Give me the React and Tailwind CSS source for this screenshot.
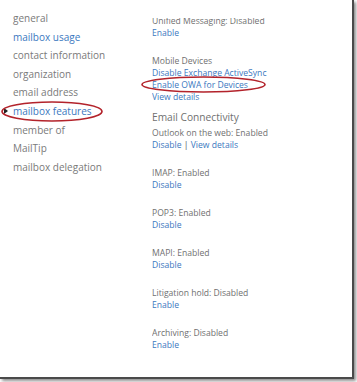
export default function App() {
  const nav = [
    { t: "general" },
    { t: "mailbox usage", blue: true },
    { t: "contact information" },
    { t: "organization" },
    { t: "email address" },
    { t: "mailbox features", blue: true, active: true },
    { t: "member of" },
    { t: "MailTip" },
    { t: "mailbox delegation" },
  ];
  const Label = ({ children }) => (
    <div className="text-[#707070] leading-[12px] h-[12px] whitespace-nowrap">{children}</div>
  );
  const Link = ({ children }) => (
    <div className="text-[#3b78c0] leading-[12px] h-[12px] whitespace-nowrap">{children}</div>
  );
  return (
    <div className="w-[357px] h-[382px] bg-white" style={{ fontFamily: '"Open Sans", "Noto Sans", sans-serif' }}>
      <div className="relative w-[354px] h-[379px] bg-white border-r-[2px] border-b-[2px] border-[#4a4a4a] shadow-[2px_2px_3px_rgba(0,0,0,0.45)] flex">
        <div className="w-[152px] shrink-0 pl-[13px] pt-[9px] text-[10px] leading-[18.6px]">
          {nav.map((n) => (
            <div key={n.t} className={`relative h-[18.6px] whitespace-nowrap ${n.blue ? "text-[#3b78c0]" : "text-[#7a7a7a]"}`}>
              {n.active && (
                <span className="absolute left-[-9px] top-[6px] w-0 h-0 border-y-[3.5px] border-y-transparent border-l-[4px] border-l-[#222]" />
              )}
              {n.t}
            </div>
          ))}
        </div>
        <div className="flex-1 mt-[18px] overflow-hidden text-[8.6px]">
          <div className="-mt-[3px]">
            <Label>Unified Messaging: Disabled</Label>
            <Link>Enable</Link>
            <div className="mt-[16px]">
              <Label>Mobile Devices</Label>
              <Link>Disable Exchange ActiveSync</Link>
              <Link>Enable OWA for Devices</Link>
              <Link>View details</Link>
            </div>
            <div className="mt-[4px] text-[10.2px] leading-[20px] h-[20px] text-[#707070] whitespace-nowrap">Email Connectivity</div>
            <Label>Outlook on the web: Enabled</Label>
            <div className="leading-[12px] h-[12px] whitespace-nowrap text-[#3b78c0]">
              Disable <span className="text-[#555]">|</span> View details
            </div>
            {[
              ["IMAP: Enabled", "Disable"],
              ["POP3: Enabled", "Disable"],
              ["MAPI: Enabled", "Disable"],
              ["Litigation hold: Disabled", "Enable"],
              ["Archiving: Disabled", "Enable"],
            ].map(([a, b]) => (
              <div key={a} className="mt-[16px]">
                <Label>{a}</Label>
                <Link>{b}</Link>
              </div>
            ))}
          </div>
        </div>
        <svg className="absolute left-0 top-0 pointer-events-none" width="354" height="379">
          <ellipse cx="52" cy="111.5" rx="50" ry="9.5" fill="none" stroke="#b3232b" strokeWidth="1.6" />
          <ellipse cx="203.5" cy="84.5" rx="61.5" ry="7.5" fill="none" stroke="#b3232b" strokeWidth="1.6" />
        </svg>
      </div>
    </div>
  );
}
